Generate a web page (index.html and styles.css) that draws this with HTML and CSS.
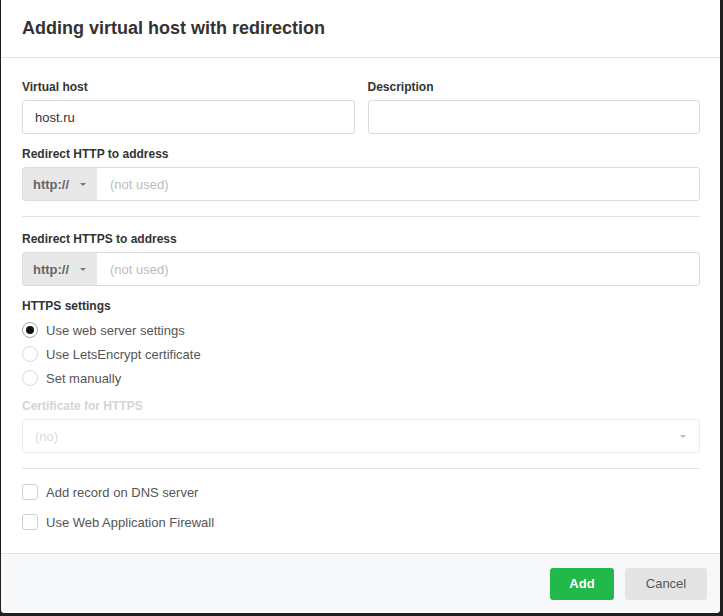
FILE: index.html
```html
<!DOCTYPE html>
<html>
<head>
<meta charset="utf-8">
<link rel="stylesheet" href="styles.css">
</head>
<body>
<div class="modal">
  <div class="modal-header">
    <h1 class="title">Adding virtual host with redirection</h1>
  </div>
  <div class="modal-body">
    <div class="row">
      <div class="field">
        <label class="label">Virtual host</label>
        <div class="input"><span class="value">host.ru</span></div>
      </div>
      <div class="field">
        <label class="label">Description</label>
        <div class="input"></div>
      </div>
    </div>
    <div class="field gap-top">
      <label class="label">Redirect HTTP to address</label>
      <div class="input-group">
        <div class="addon">http://<span class="caret"></span></div>
        <div class="group-input"><span class="placeholder">(not used)</span></div>
      </div>
    </div>
    <div class="separator"></div>
    <div class="field">
      <label class="label">Redirect HTTPS to address</label>
      <div class="input-group">
        <div class="addon">http://<span class="caret"></span></div>
        <div class="group-input"><span class="placeholder">(not used)</span></div>
      </div>
    </div>
    <div class="field https-block">
      <label class="label">HTTPS settings</label>
      <div class="radios">
        <div class="radio-row"><span class="radio checked"></span><span class="opt">Use web server settings</span></div>
        <div class="radio-row"><span class="radio"></span><span class="opt">Use LetsEncrypt certificate</span></div>
        <div class="radio-row"><span class="radio"></span><span class="opt">Set manually</span></div>
      </div>
    </div>
    <div class="field cert-block">
      <label class="label disabled">Certificate for HTTPS</label>
      <div class="input select disabled-input"><span class="no">(no)</span><span class="caret light"></span></div>
    </div>
    <div class="separator"></div>
    <div class="checks">
      <div class="check-row"><span class="checkbox"></span><span class="opt">Add record on DNS server</span></div>
      <div class="check-row"><span class="checkbox"></span><span class="opt">Use Web Application Firewall</span></div>
    </div>
  </div>
  <div class="modal-footer">
    <button class="btn btn-add">Add</button>
    <button class="btn btn-cancel">Cancel</button>
  </div>
</div>
</body>
</html>
```
FILE: styles.css
```css
html, body {
  margin: 0;
  padding: 0;
  background: #1f1f1f;
}
body {
  font-family: "Liberation Sans", Arial, sans-serif;
  color: #333;
  width: 723px;
  height: 616px;
  overflow: hidden;
}
.modal {
  margin-left: 1px;
  width: 719px;
  height: 613px;
  background: #fff;
  border-radius: 0 0 4px 4px;
  display: flex;
  flex-direction: column;
  overflow: hidden;
}
.modal-header {
  height: 57px;
  border-bottom: 1px solid #e3e3e3;
  display: flex;
  align-items: center;
  padding: 0 21px;
  box-sizing: content-box;
}
.title {
  margin: 0;
  font-size: 18px;
  font-weight: bold;
  color: #333;
  line-height: 22px;
  position: relative;
  top: -1px;
}
.modal-body {
  flex: 1;
  padding: 22px 20px 0 21px;
}
.row {
  display: flex;
  gap: 13px;
}
.row .field { flex: 1; }
.field { display: flex; flex-direction: column; }
.gap-top { margin-top: 13px; }
.label {
  font-size: 12px;
  font-weight: bold;
  line-height: 14px;
  margin-bottom: 6px;
  color: #333;
}
.label.disabled { color: #d4d4d4; }
.input {
  height: 34px;
  box-sizing: border-box;
  border: 1px solid #dcdcdc;
  border-radius: 3px;
  display: flex;
  align-items: center;
  padding: 0 12px;
  font-size: 13px;
}
.value { color: #333; }
.input-group {
  display: flex;
  height: 34px;
  box-sizing: border-box;
  border: 1px solid #dcdcdc;
  border-radius: 3px;
  overflow: hidden;
}
.addon {
  width: 74px;
  background: #e8e8e8;
  display: flex;
  align-items: center;
  padding-left: 10px;
  box-sizing: border-box;
  font-size: 13px;
  font-weight: bold;
  color: #666;
}
.caret {
  display: inline-block;
  width: 0;
  height: 0;
  border-left: 3px solid transparent;
  border-right: 3px solid transparent;
  border-top: 3px solid #777;
  margin-left: 11px;
}
.group-input {
  flex: 1;
  display: flex;
  align-items: center;
  padding-left: 13px;
  font-size: 13px;
}
.placeholder { color: #bcbcbc; }
.separator {
  height: 1px;
  background: #e2e2e2;
  margin: 15px 0;
}
.https-block { margin-top: 13px; }
.radios { display: flex; flex-direction: column; margin-top: -1px; }
.radio-row, .check-row {
  display: flex;
  align-items: center;
  font-size: 13px;
  color: #555;
}
.radio-row { height: 24px; }
.radio {
  width: 16px;
  height: 16px;
  box-sizing: border-box;
  border: 1px solid #dadada;
  border-radius: 50%;
  margin-right: 8px;
  display: flex;
  align-items: center;
  justify-content: center;
}
.radio.checked { border-color: #a8a8a8; }
.radio.checked::after {
  content: "";
  width: 8px;
  height: 8px;
  border-radius: 50%;
  background: #111;
}
.cert-block { margin-top: 9px; }
.disabled-input {
  border-color: #ececec;
  justify-content: space-between;
}
.no { color: #dcdcdc; }
.caret.light { border-top-color: #bbb; margin-right: 1px; }
.checks { display: flex; flex-direction: column; margin-top: -7px; }
.check-row { height: 30px; }
.checkbox {
  width: 16px;
  height: 16px;
  box-sizing: border-box;
  border: 1px solid #d0d0d0;
  border-radius: 3px;
  margin-right: 8px;
}
.modal-footer {
  border-top: 1px solid #e3e3e3;
  background: #f7f8fa;
  height: 60px;
  box-sizing: border-box;
  padding: 0 13px 0 0;
  display: flex;
  align-items: center;
  justify-content: flex-end;
  gap: 11px;
}
.btn {
  height: 32px;
  border: none;
  border-radius: 3px;
  font-family: "Liberation Sans", Arial, sans-serif;
  font-size: 13px;
  padding: 0;
}
.btn-add {
  width: 64px;
  background: #22b84a;
  color: #fff;
  font-weight: bold;
}
.btn-cancel {
  width: 82px;
  background: #e4e4e4;
  color: #555;
}
```
